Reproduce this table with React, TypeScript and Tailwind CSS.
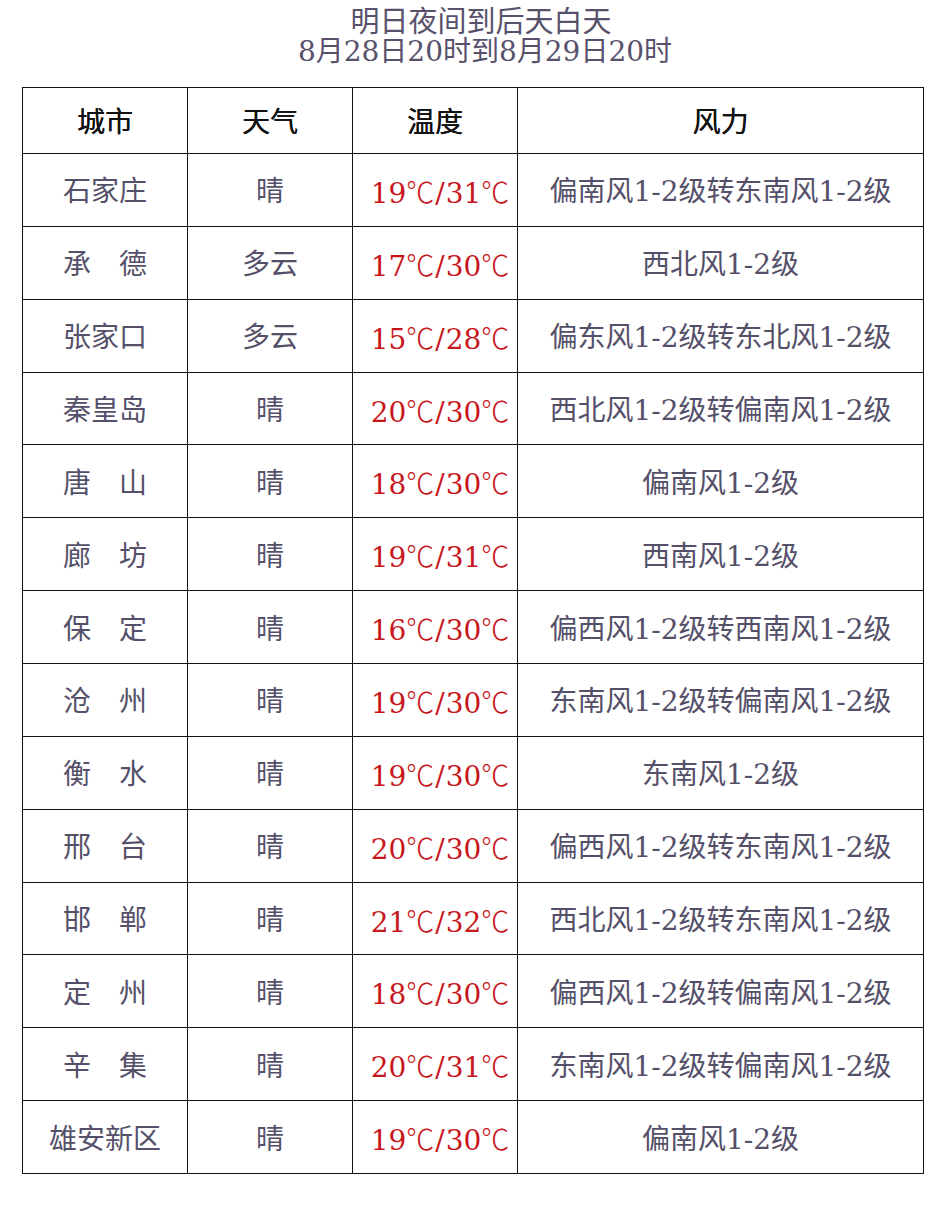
import React from "react";

const rows: [string, string, string, string][] = [
  ["石家庄", "晴", "19℃/31℃", "偏南风1-2级转东南风1-2级"],
  ["承　德", "多云", "17℃/30℃", "西北风1-2级"],
  ["张家口", "多云", "15℃/28℃", "偏东风1-2级转东北风1-2级"],
  ["秦皇岛", "晴", "20℃/30℃", "西北风1-2级转偏南风1-2级"],
  ["唐　山", "晴", "18℃/30℃", "偏南风1-2级"],
  ["廊　坊", "晴", "19℃/31℃", "西南风1-2级"],
  ["保　定", "晴", "16℃/30℃", "偏西风1-2级转西南风1-2级"],
  ["沧　州", "晴", "19℃/30℃", "东南风1-2级转偏南风1-2级"],
  ["衡　水", "晴", "19℃/30℃", "东南风1-2级"],
  ["邢　台", "晴", "20℃/30℃", "偏西风1-2级转东南风1-2级"],
  ["邯　郸", "晴", "21℃/32℃", "西北风1-2级转东南风1-2级"],
  ["定　州", "晴", "18℃/30℃", "偏西风1-2级转偏南风1-2级"],
  ["辛　集", "晴", "20℃/31℃", "东南风1-2级转偏南风1-2级"],
  ["雄安新区", "晴", "19℃/30℃", "偏南风1-2级"],
];

const font = {
  fontFamily: '"DejaVu Serif", "Noto Sans CJK SC", serif',
};

function Deg() {
  return (
    <span style={{ fontFamily: '"Noto Sans CJK SC", sans-serif' }} className="font-light">
      ℃
    </span>
  );
}

function Temp({ v }: { v: string }) {
  const [a, b] = v.replace(/℃/g, "").split("/");
  return (
    <>
      {a}
      <Deg />
      <span className="mx-[1px]">/</span>
      {b}
      <Deg />
    </>
  );
}

const cell =
  "border-[1.5px] border-[#111] text-center align-middle text-[28px] leading-[34px] p-0 pt-[5px] whitespace-nowrap";

export default function App() {
  return (
    <div className="w-[942px] h-[1218px] bg-white" style={font}>
      <div className="pt-[8px] flex flex-col items-center gap-[2px] text-[#57516b]">
        <div className="pl-[20px] text-[29px] leading-[28px] h-[28px] overflow-visible">明日夜间到后天白天</div>
        <div className="pl-[28px] text-[28px] leading-[28px] h-[28px] overflow-visible">8月28日20时到8月29日20时</div>
      </div>
      <div className="pl-[22px] pt-[21px]">
        <table className="border-collapse table-fixed w-[901px]">
          <colgroup>
            <col className="w-[165px]" />
            <col className="w-[165px]" />
            <col className="w-[165px]" />
            <col className="w-[406px]" />
          </colgroup>
          <thead>
            <tr className="h-[66px]">
              {["城市", "天气", "温度", "风力"].map((h) => (
                <th
                  key={h}
                  className={`${cell} text-[26px] font-normal text-[#111]`}
                >
                  <span className="[text-shadow:0.3px_0_0_#111]">{h}</span>
                </th>
              ))}
            </tr>
          </thead>
          <tbody>
            {rows.map((r) => (
              <tr key={r[0]} className="h-[72.86px]">
                <td className={`${cell} text-[#555069]`}>{r[0]}</td>
                <td className={`${cell} text-[#555069]`}>{r[1]}</td>
                <td className={`${cell} text-[#c8161d] pl-[10px]`}>
                  <Temp v={r[2]} />
                </td>
                <td className={`${cell} text-[#555069]`}>{r[3]}</td>
              </tr>
            ))}
          </tbody>
        </table>
      </div>
    </div>
  );
}
